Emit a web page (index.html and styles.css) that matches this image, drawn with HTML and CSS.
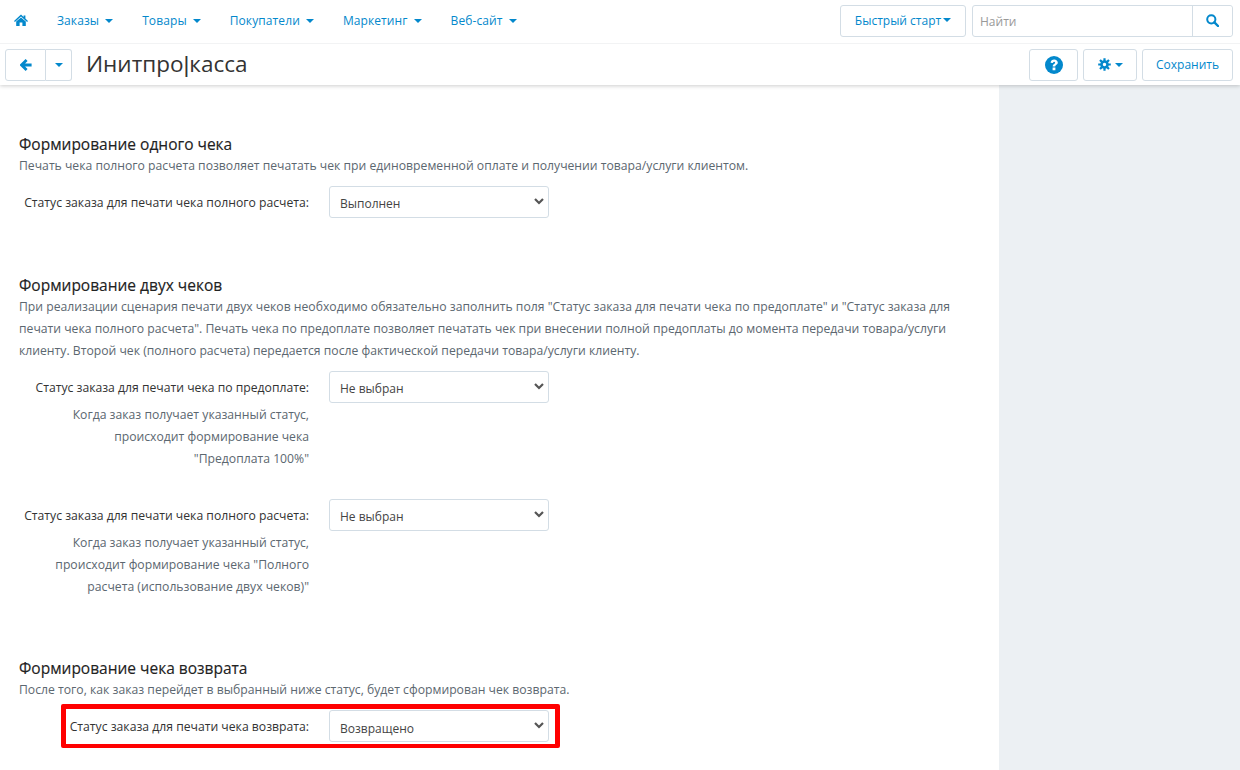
FILE: index.html
```html
<!DOCTYPE html>
<html lang="ru">
<head>
<meta charset="utf-8">
<title>Инитпро|касса</title>
<link rel="stylesheet" href="styles.css">
</head>
<body>
<div class="page">
  <header class="header">
    <nav class="topbar">
      <a class="home" href="#"><svg width="14" height="12" viewBox="0 0 14 12"><path d="M7 0.6 L9.6 3 V1.4 H11.4 V4.6 L14 7 L13.1 8 L7 2.5 L0.9 8 L0 7 Z M2.2 7.6 L7 3.4 L11.8 7.6 V12 H8.4 V8.6 H5.6 V12 H2.2 Z" fill="#0388cc"/></svg></a>
      <a class="menu-item" href="#">Заказы<i class="caret"></i></a>
      <a class="menu-item" href="#">Товары<i class="caret"></i></a>
      <a class="menu-item" href="#">Покупатели<i class="caret"></i></a>
      <a class="menu-item" href="#">Маркетинг<i class="caret"></i></a>
      <a class="menu-item" href="#">Веб-сайт<i class="caret"></i></a>
      <span class="spacer"></span>
      <a class="btn quick" href="#">Быстрый старт<i class="caret tight"></i></a>
      <div class="search">
        <input class="search-input" placeholder="Найти">
        <button class="search-btn"><svg width="13" height="13" viewBox="0 0 13 13"><circle cx="5.3" cy="5.3" r="4.1" fill="none" stroke="#0388cc" stroke-width="2"/><path d="M8.4 8.4 L12 12" stroke="#0388cc" stroke-width="2.4" stroke-linecap="round"/></svg></button>
      </div>
    </nav>
    <div class="actionbar">
      <div class="btn-group">
        <a class="btn back" href="#"><svg width="12" height="12" viewBox="0 0 12 12"><path d="M6.6 1 L1.6 6 L6.6 11 M2 6 H11.6" fill="none" stroke="#0388cc" stroke-width="2.8"/></svg></a>
        <a class="btn drop" href="#"><i class="caret flush"></i></a>
      </div>
      <h1 class="title">Инитпро<span class="bar">|</span>касса</h1>
      <span class="spacer"></span>
      <a class="btn help" href="#"><svg width="18" height="18" viewBox="0 0 18 18"><circle cx="9" cy="9" r="9" fill="#0388cc"/><path d="M5.6 6.8 C5.6 4.6 7.3 3.4 9.2 3.4 C11.2 3.4 12.8 4.8 12.8 6.6 C12.8 9 10.3 8.9 10.3 10.6 H7.7 C7.7 7.8 10.1 8 10.1 6.7 C10.1 6.1 9.7 5.8 9.1 5.8 C8.5 5.8 8.1 6.2 8 6.9 Z M7.6 11.6 H10.4 V14.2 H7.6 Z" fill="#fff"/></svg></a>
      <a class="btn gear" href="#"><svg width="13" height="13" viewBox="0 0 13 13"><circle cx="6.5" cy="6.5" r="3" fill="none" stroke="#0388cc" stroke-width="2.6"/><path d="M6.5 0.2 V3 M6.5 10 V12.8 M0.2 6.5 H3 M10 6.5 H12.8 M2 2 L3.9 3.9 M9.1 9.1 L11 11 M2 11 L3.9 9.1 M9.1 3.9 L11 2" stroke="#0388cc" stroke-width="2.2"/></svg><i class="caret gear-caret"></i></a>
      <a class="btn save" href="#">Сохранить</a>
    </div>
  </header>
  <div class="body-row">
    <main class="content">
      <section class="section first">
        <h2 class="heading">Формирование одного чека</h2>
        <p class="desc">Печать чека полного расчета позволяет печатать чек при единовременной оплате и получении товара/услуги клиентом.</p>
        <div class="field">
          <label class="label">Статус заказа для печати чека полного расчета:</label>
          <div class="select"><span>Выполнен</span><svg class="chev" width="10" height="7" viewBox="0 0 10 7"><path d="M1 1 L5 5 L9 1" fill="none" stroke="#555" stroke-width="2.2"/></svg></div>
        </div>
      </section>
      <section class="section second">
        <h2 class="heading">Формирование двух чеков</h2>
        <p class="desc">При реализации сценария печати двух чеков необходимо обязательно заполнить поля "Статус заказа для печати чека по предоплате" и "Статус заказа для<br>печати чека полного расчета". Печать чека по предоплате позволяет печатать чек при внесении полной предоплаты до момента передачи товара/услуги<br>клиенту. Второй чек (полного расчета) передается после фактической передачи товара/услуги клиенту.</p>
        <div class="field">
          <div class="label-col">
            <label class="label">Статус заказа для печати чека по предоплате:</label>
            <p class="hint">Когда заказ получает указанный статус,<br>происходит формирование чека<br>"Предоплата 100%"</p>
          </div>
          <div class="select"><span>Не выбран</span><svg class="chev" width="10" height="7" viewBox="0 0 10 7"><path d="M1 1 L5 5 L9 1" fill="none" stroke="#555" stroke-width="2.2"/></svg></div>
        </div>
        <div class="field next">
          <div class="label-col">
            <label class="label">Статус заказа для печати чека полного расчета:</label>
            <p class="hint">Когда заказ получает указанный статус,<br>происходит формирование чека "Полного<br>расчета (использование двух чеков)"</p>
          </div>
          <div class="select"><span>Не выбран</span><svg class="chev" width="10" height="7" viewBox="0 0 10 7"><path d="M1 1 L5 5 L9 1" fill="none" stroke="#555" stroke-width="2.2"/></svg></div>
        </div>
      </section>
      <section class="section third">
        <h2 class="heading">Формирование чека возврата</h2>
        <p class="desc">После того, как заказ перейдет в выбранный ниже статус, будет сформирован чек возврата.</p>
        <div class="field marked">
          <label class="label">Статус заказа для печати чека возврата:</label>
          <div class="select"><span>Возвращено</span><svg class="chev" width="10" height="7" viewBox="0 0 10 7"><path d="M1 1 L5 5 L9 1" fill="none" stroke="#555" stroke-width="2.2"/></svg></div>
          <div class="red-box"></div>
        </div>
      </section>
    </main>
    <aside class="sidebar"></aside>
  </div>
</div>
</body>
</html>
```

FILE: styles.css
```css
* { box-sizing: border-box; }
html, body { margin: 0; padding: 0; height: 100%; overflow: hidden; }
body { font-family: "Open Sans", "Liberation Sans", sans-serif; font-size: 12.2px; color: #333; background: #fff; }
a { text-decoration: none; color: #0388cc; }
.page { display: flex; flex-direction: column; height: 770px; }
.header { position: relative; z-index: 2; background: #fff; box-shadow: 0 1px 4px rgba(0,0,0,.2); height: 85px; }
.topbar { display: flex; align-items: center; height: 44px; padding: 0 7px 2px 14px; border-bottom: 1px solid #f2f3f4; }
.home { display: flex; width: 14px; margin-right: 29px; margin-top: -2px; }
.menu-item { display: flex; align-items: center; margin-right: 29px; font-size: 12px; letter-spacing: .1px; }
.caret { display: inline-block; width: 0; height: 0; margin-left: 6px; border-left: 4px solid transparent; border-right: 4px solid transparent; border-top: 4px solid #0388cc; }
.caret.tight { margin-left: 2px; margin-top: -1px; }
.caret.flush { margin-left: 0; }
.caret.gear-caret { margin-left: 4px; }
.spacer { flex: 1; }
.btn { display: flex; align-items: center; justify-content: center; height: 32px; background: #fff; border: 1px solid #d3dde5; border-radius: 3px; font-size: 12px; }
.quick { width: 126px; margin-right: 6px; }
.search { display: flex; width: 261px; height: 32px; border: 1px solid #d3dde5; border-radius: 3px; }
.search-input { flex: 1; min-width: 0; border: 0; outline: 0; padding: 1px 7px 0; font: 12px "Open Sans", sans-serif; background: transparent; }
.search-input::placeholder { color: #999; opacity: 1; }
.search-btn { width: 40px; display: flex; align-items: center; justify-content: center; padding: 0; background: #fff; border: 0; border-left: 1px solid #d3dde5; border-radius: 0 3px 3px 0; }
.actionbar { display: flex; align-items: center; height: 41px; padding: 0 7px 0 5px; }
.btn-group { display: flex; }
.back { width: 41px; border-radius: 3px 0 0 3px; }
.drop { width: 26px; border-left: 0; border-radius: 0 3px 3px 0; }
.title { margin: 0 0 0 14px; font-size: 22.5px; font-weight: 400; line-height: 32px; color: #333; }
.bar { font-family: "Liberation Sans", sans-serif; }
.help { width: 49px; margin-right: 5px; }
.gear { width: 54px; margin-right: 5px; }
.save { width: 91px; }
.body-row { flex: 1; display: flex; min-height: 0; }
.content { width: 999px; padding: 0 19px; background: #fff; }
.sidebar { flex: 1; background: #ecf0f3; }
.heading { margin: 0; font-size: 15.5px; font-weight: 400; line-height: 20px; color: #222; -webkit-text-stroke: .15px #222; }
.desc { margin: 1px 0 0; line-height: 22px; color: #5c6770; }
.first { padding-top: 49px; }
.second { padding-top: 55px; }
.third { padding-top: 60px; }
.field { display: flex; align-items: flex-start; margin-top: 9px; }
.field.next { margin-top: 29px; }
.field.marked { position: relative; margin-top: 9px; }
.label, .label-col { width: 290px; flex: none; text-align: right; }
.label { display: block; line-height: 34px; color: #333; }
.hint { margin: -1px 0 0; line-height: 22px; color: #5c6770; }
.select { display: flex; align-items: center; justify-content: space-between; width: 220px; height: 32px; margin-left: 20px; padding: 2px 4px 0 10px; border: 1px solid #d3dde5; border-radius: 3px; font-size: 12px; color: #444; }
.marked .select { padding-top: 4px; }
.chev { margin-top: -3px; }
.marked .chev { margin-top: -5px; }
.red-box { position: absolute; left: 42px; top: -6px; width: 499px; height: 44px; border: 5px solid #f00; border-bottom-width: 4px; border-radius: 2px; pointer-events: none; }
```
